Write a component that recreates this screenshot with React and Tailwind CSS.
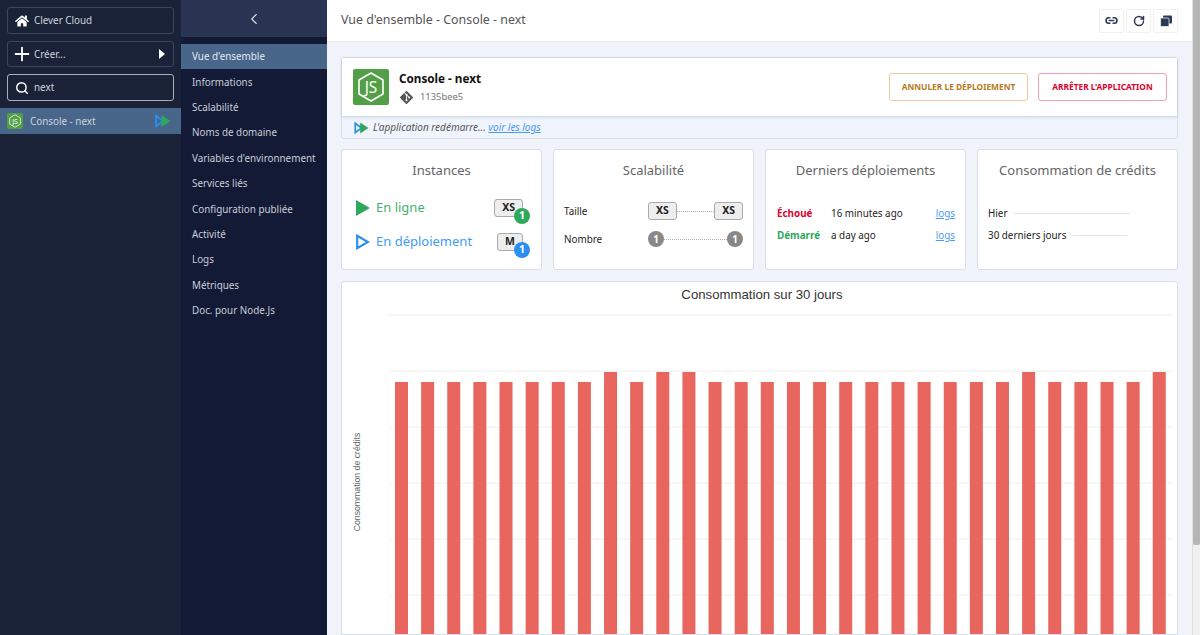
import { FaHome, FaGitAlt } from 'react-icons/fa';
import { Plus, Search, ChevronLeft, Link2, RotateCw } from 'lucide-react';

const menu = ["Vue d'ensemble", 'Informations', 'Scalabilité', 'Noms de domaine', "Variables d'environnement", 'Services liés', 'Configuration publiée', 'Activité', 'Logs', 'Métriques', 'Doc. pour Node.Js'];

const highBars = [8, 10, 11, 24, 29];
const gridLines = [315, 371, 427, 483, 539, 595];

function NodeLogo({ size, rounded }) {
    return (
        <div className={`flex items-center justify-center bg-[#529f47] shrink-0 ${rounded}`} style={{ width: size, height: size }}>
            <svg viewBox="0 0 36 36" width={size} height={size}>
                <path d="M18 4 L30 11 V25 L18 32 L6 25 V11 Z" fill="none" stroke="#fff" strokeWidth="1.6" strokeLinejoin="round" />
                <text x="18" y="24" textAnchor="middle" fill="#fff" fontSize="15.5" fontFamily="Noto Sans, sans-serif" fontWeight="400">JS</text>
            </svg>
        </div>
    );
}

function DeployIcon({ className }) {
    return (
        <svg viewBox="0 0 17 14" className={className}>
            <path d="M1.2 1.5 L8.5 7 L1.2 12.5 Z" fill="none" stroke="#2b8fef" strokeWidth="2" />
            <path d="M7 0.5 L16.5 7 L7 13.5 Z" fill="#2fa85c" />
        </svg>
    );
}

function Sizer({ label, badge, badgeColor }) {
    return (
        <div className="relative h-[18px] px-[7px] flex items-center justify-center rounded-[3px] bg-[#eeeeee] border-[1.5px] border-[#aaaaaa] text-[10.5px] font-bold text-[#222222]">
            {label}
            {badge && (
                <span className={`absolute -right-[8px] -bottom-[8px] w-4 h-4 rounded-full flex items-center justify-center text-white text-[10.5px] font-bold ${badgeColor}`}>{badge}</span>
            )}
        </div>
    );
}

function Tile({ title, children }) {
    return (
        <div className="bg-white border border-[#d9deea] rounded-[3px] h-[121px] flex flex-col">
            <h3 className="text-center text-[13px] leading-5 text-[#666666] mt-[10px]">{title}</h3>
            {children}
        </div>
    );
}

function Chart() {
    return (
        <svg viewBox="341 282 837 353" width="837" height="353" className="block">
            <text x="761" y="299" textAnchor="middle" fontSize="13.2" fill="#333333" fontFamily="Liberation Sans, sans-serif">Consommation sur 30 jours</text>
            <text transform="translate(359 482) rotate(-90)" textAnchor="middle" fontSize="8.7" fill="#666666" fontFamily="Liberation Sans, sans-serif">Consommation de crédits</text>
            {gridLines.map((y) => (
                <line key={y} x1="388" x2="1171" y1={y} y2={y} stroke="#eeeeee" strokeWidth="1" />
            ))}
            {Array.from({ length: 30 }).map((_, i) => {
                const top = highBars.includes(i) ? 372 : 382;
                return <rect key={i} x={394 + i * 26.13} y={top} width="13" height={640 - top} fill="#e8665e" />;
            })}
        </svg>
    );
}

export default function App() {
    return (
        <div className="h-[635px] w-[1200px] overflow-hidden flex font-['Noto_Sans',sans-serif] text-[9.85px]">
            {/* colonne organisation */}
            <aside className="w-[181px] bg-[#1a2238] shrink-0 pt-[7px] text-[#cfd4de]">
                <div className="flex flex-col gap-[7px] px-[7px]">
                    <div className="h-[27px] border border-[#3a4560] rounded-[3px] flex items-center pl-[7px]">
                        <FaHome className="w-[14px] h-[14px] text-white mr-[5px]" />
                        <span>Clever Cloud</span>
                    </div>
                    <div className="h-[26px] border border-[#3a4560] rounded-[3px] flex items-center pl-[7px] pr-[8px]">
                        <Plus className="w-[22px] h-[22px] text-white -ml-[4px] mr-[1px]" strokeWidth={2} />
                        <span className="flex-1">Créer...</span>
                        <span className="w-0 h-0 border-y-[5.5px] border-y-transparent border-l-[6px] border-l-white" />
                    </div>
                    <div className="h-[27px] border border-[#a9aebb] rounded-[3px] flex items-center pl-[7px]">
                        <Search className="w-[14px] h-[14px] text-white mr-[5px]" strokeWidth={2.5} />
                        <span>next</span>
                    </div>
                </div>
                <div className="mt-[7px] h-[26px] bg-[#47668a] flex items-center pl-[7px] pr-[10px]">
                    <NodeLogo size={16} rounded="rounded-[2px]" />
                    <span className="ml-[7px] flex-1">Console - next</span>
                    <DeployIcon className="w-[16px] h-[14px]" />
                </div>
            </aside>

            {/* menu de l'application */}
            <nav className="w-[146px] bg-[#131a35] shrink-0 text-[#c9ced9]">
                <div className="h-[37px] bg-[#2a3554] flex items-center justify-center mb-[7px]">
                    <ChevronLeft className="w-[18px] h-[18px] text-[#dde1ea]" strokeWidth={1.5} />
                </div>
                {menu.map((item, i) => (
                    <div key={item} className={`h-[25.4px] flex items-center pl-[11px] whitespace-nowrap ${i === 0 ? 'bg-[#47668a] text-[#e4e8ef]' : ''}`}>{item}</div>
                ))}
            </nav>

            {/* contenu */}
            <main className="flex-1 min-w-0 flex flex-col bg-[#f0f3f9]">
                <header className="h-[42px] shrink-0 bg-white border-b border-[#e8ebf2] flex items-center pl-[14px] pr-[14px]">
                    <h1 className="flex-1 text-[12.4px] text-[#555555]">Vue d'ensemble - Console - next</h1>
                    <div className="flex gap-[2px]">
                        <button className="w-[25px] h-[24px] border border-[#f0f0f0] rounded-[2px] flex items-center justify-center"><Link2 className="w-[13px] h-[13px] text-[#2d3a55]" strokeWidth={3} /></button>
                        <button className="w-[25px] h-[24px] border border-[#f0f0f0] rounded-[2px] flex items-center justify-center"><RotateCw className="w-[12px] h-[12px] text-[#2d3a55]" strokeWidth={3} /></button>
                        <button className="w-[25px] h-[24px] border border-[#f0f0f0] rounded-[2px] flex items-center justify-center">
                            <svg viewBox="0 0 12 12" className="w-[12px] h-[12px]">
                                <rect x="3" y="0.5" width="9" height="8" rx="1" fill="#2d3a55" />
                                <rect x="0.5" y="3" width="8.5" height="8.5" rx="1" fill="#2d3a55" stroke="#fff" strokeWidth="0.7" />
                            </svg>
                        </button>
                    </div>
                </header>

                <div className="flex-1 min-h-0 overflow-hidden pt-[15px] pl-[14px] pr-[14px] flex flex-col gap-[10px]">
                    <section className="shrink-0 border border-[#d9deea] rounded-[3px] bg-[#f0f4fc] h-[82px]">
                        <div className="h-[58px] bg-white shadow-[0_1px_3px_rgba(100,120,170,0.3)] flex items-center pl-[11px] pr-[10px]">
                            <NodeLogo size={36} rounded="rounded-[2px]" />
                            <div className="ml-[10px] flex-1">
                                <div className="text-[11.7px] leading-[17px] font-bold text-[#111111]">Console - next</div>
                                <div className="flex items-center mt-[3px] text-[9.4px] text-[#777777]">
                                    <FaGitAlt className="w-[15px] h-[15px] text-[#555555] mr-[6px]" />
                                    <span>1135bee5</span>
                                </div>
                            </div>
                            <button className="h-[28px] w-[139px] border border-[#e8cc9c] rounded-[3px] text-[8.4px] font-bold text-[#b87a1f] mr-[10px]">ANNULER LE DÉPLOIEMENT</button>
                            <button className="h-[28px] w-[129px] border border-[#f2a0ad] rounded-[3px] text-[8.4px] font-bold text-[#d9042f]">ARRÊTER L'APPLICATION</button>
                        </div>
                        <div className="h-[23px] flex items-center pl-[12px] text-[10px] text-[#555555] italic">
                            <DeployIcon className="w-[15px] h-[12px] mr-[4px]" />
                            <span>L'application redémarre... <a className="text-[#4a9bf5] underline">voir les logs</a></span>
                        </div>
                    </section>

                    <section className="shrink-0 grid grid-cols-4 gap-[11px]">
                        <Tile title="Instances">
                            <div className="flex-1 pl-[14px] pr-[18px] pt-[18px] flex flex-col gap-[15px]">
                                <div className="flex items-center h-[19px]">
                                    <span className="w-0 h-0 border-y-[8px] border-y-transparent border-l-[14px] border-l-[#2fa85c] mr-[6px]" />
                                    <span className="flex-1 text-[13px] text-[#43b36c]">En ligne</span>
                                    <Sizer label="XS" badge="1" badgeColor="bg-[#2fa85c]" />
                                </div>
                                <div className="flex items-center h-[19px]">
                                    <svg viewBox="0 0 14 16" className="w-[14px] h-[16px] mr-[6px]"><path d="M1.2 1.8 L12 8 L1.2 14.2 Z" fill="none" stroke="#2b8fef" strokeWidth="2.2" /></svg>
                                    <span className="flex-1 text-[13px] text-[#3f9bf5]">En déploiement</span>
                                    <Sizer label="M" badge="1" badgeColor="bg-[#2b8fef]" />
                                </div>
                            </div>
                        </Tile>
                        <Tile title="Scalabilité">
                            <div className="flex-1 pl-[10px] pr-[10px] pt-[22px] grid grid-cols-[84px_1fr] content-start gap-y-[11px] items-center text-[#222222]">
                                <span>Taille</span>
                                <div className="flex items-center">
                                    <Sizer label="XS" />
                                    <span className="flex-1 border-t border-dotted border-[#aaaaaa]" />
                                    <Sizer label="XS" />
                                </div>
                                <span>Nombre</span>
                                <div className="flex items-center">
                                    <span className="w-4 h-4 rounded-full bg-[#888888] text-white font-bold flex items-center justify-center">1</span>
                                    <span className="flex-1 border-t border-dotted border-[#aaaaaa]" />
                                    <span className="w-4 h-4 rounded-full bg-[#888888] text-white font-bold flex items-center justify-center">1</span>
                                </div>
                            </div>
                        </Tile>
                        <Tile title="Derniers déploiements">
                            <div className="pl-[11px] pr-[10px] pt-[26px] grid grid-cols-[54px_1fr_auto] gap-y-[8px] leading-[14px] text-[#222222]">
                                <span className="font-bold text-[#d9042f]">Échoué</span>
                                <span>16 minutes ago</span>
                                <a className="text-[#4a9bf5] underline">logs</a>
                                <span className="font-bold text-[#2fa85c]">Démarré</span>
                                <span>a day ago</span>
                                <a className="text-[#4a9bf5] underline">logs</a>
                            </div>
                        </Tile>
                        <Tile title="Consommation de crédits">
                            <div className="pl-[10px] pt-[26px] flex flex-col gap-[8px] leading-[14px] text-[#222222]">
                                <div className="flex items-center"><span>Hier</span><span className="ml-[7px] w-[116px] border-t border-[#e0e3ea]" /></div>
                                <div className="flex items-center"><span>30 derniers jours</span><span className="ml-[7px] w-[54px] border-t border-[#e0e3ea]" /></div>
                            </div>
                        </Tile>
                    </section>

                    <section className="flex-1 min-h-0 mt-[1px] bg-white border border-[#d9deea] rounded-t-[3px] overflow-hidden">
                        <Chart />
                    </section>
                </div>
            </main>

            {/* barre de défilement */}
            <div className="w-[8px] shrink-0 bg-[#f0f0f0] border-l border-[#e0e0e0]">
                <div className="h-[545px] bg-[#b5b5b5] rounded-b-[2px]" />
            </div>
        </div>
    );
}
